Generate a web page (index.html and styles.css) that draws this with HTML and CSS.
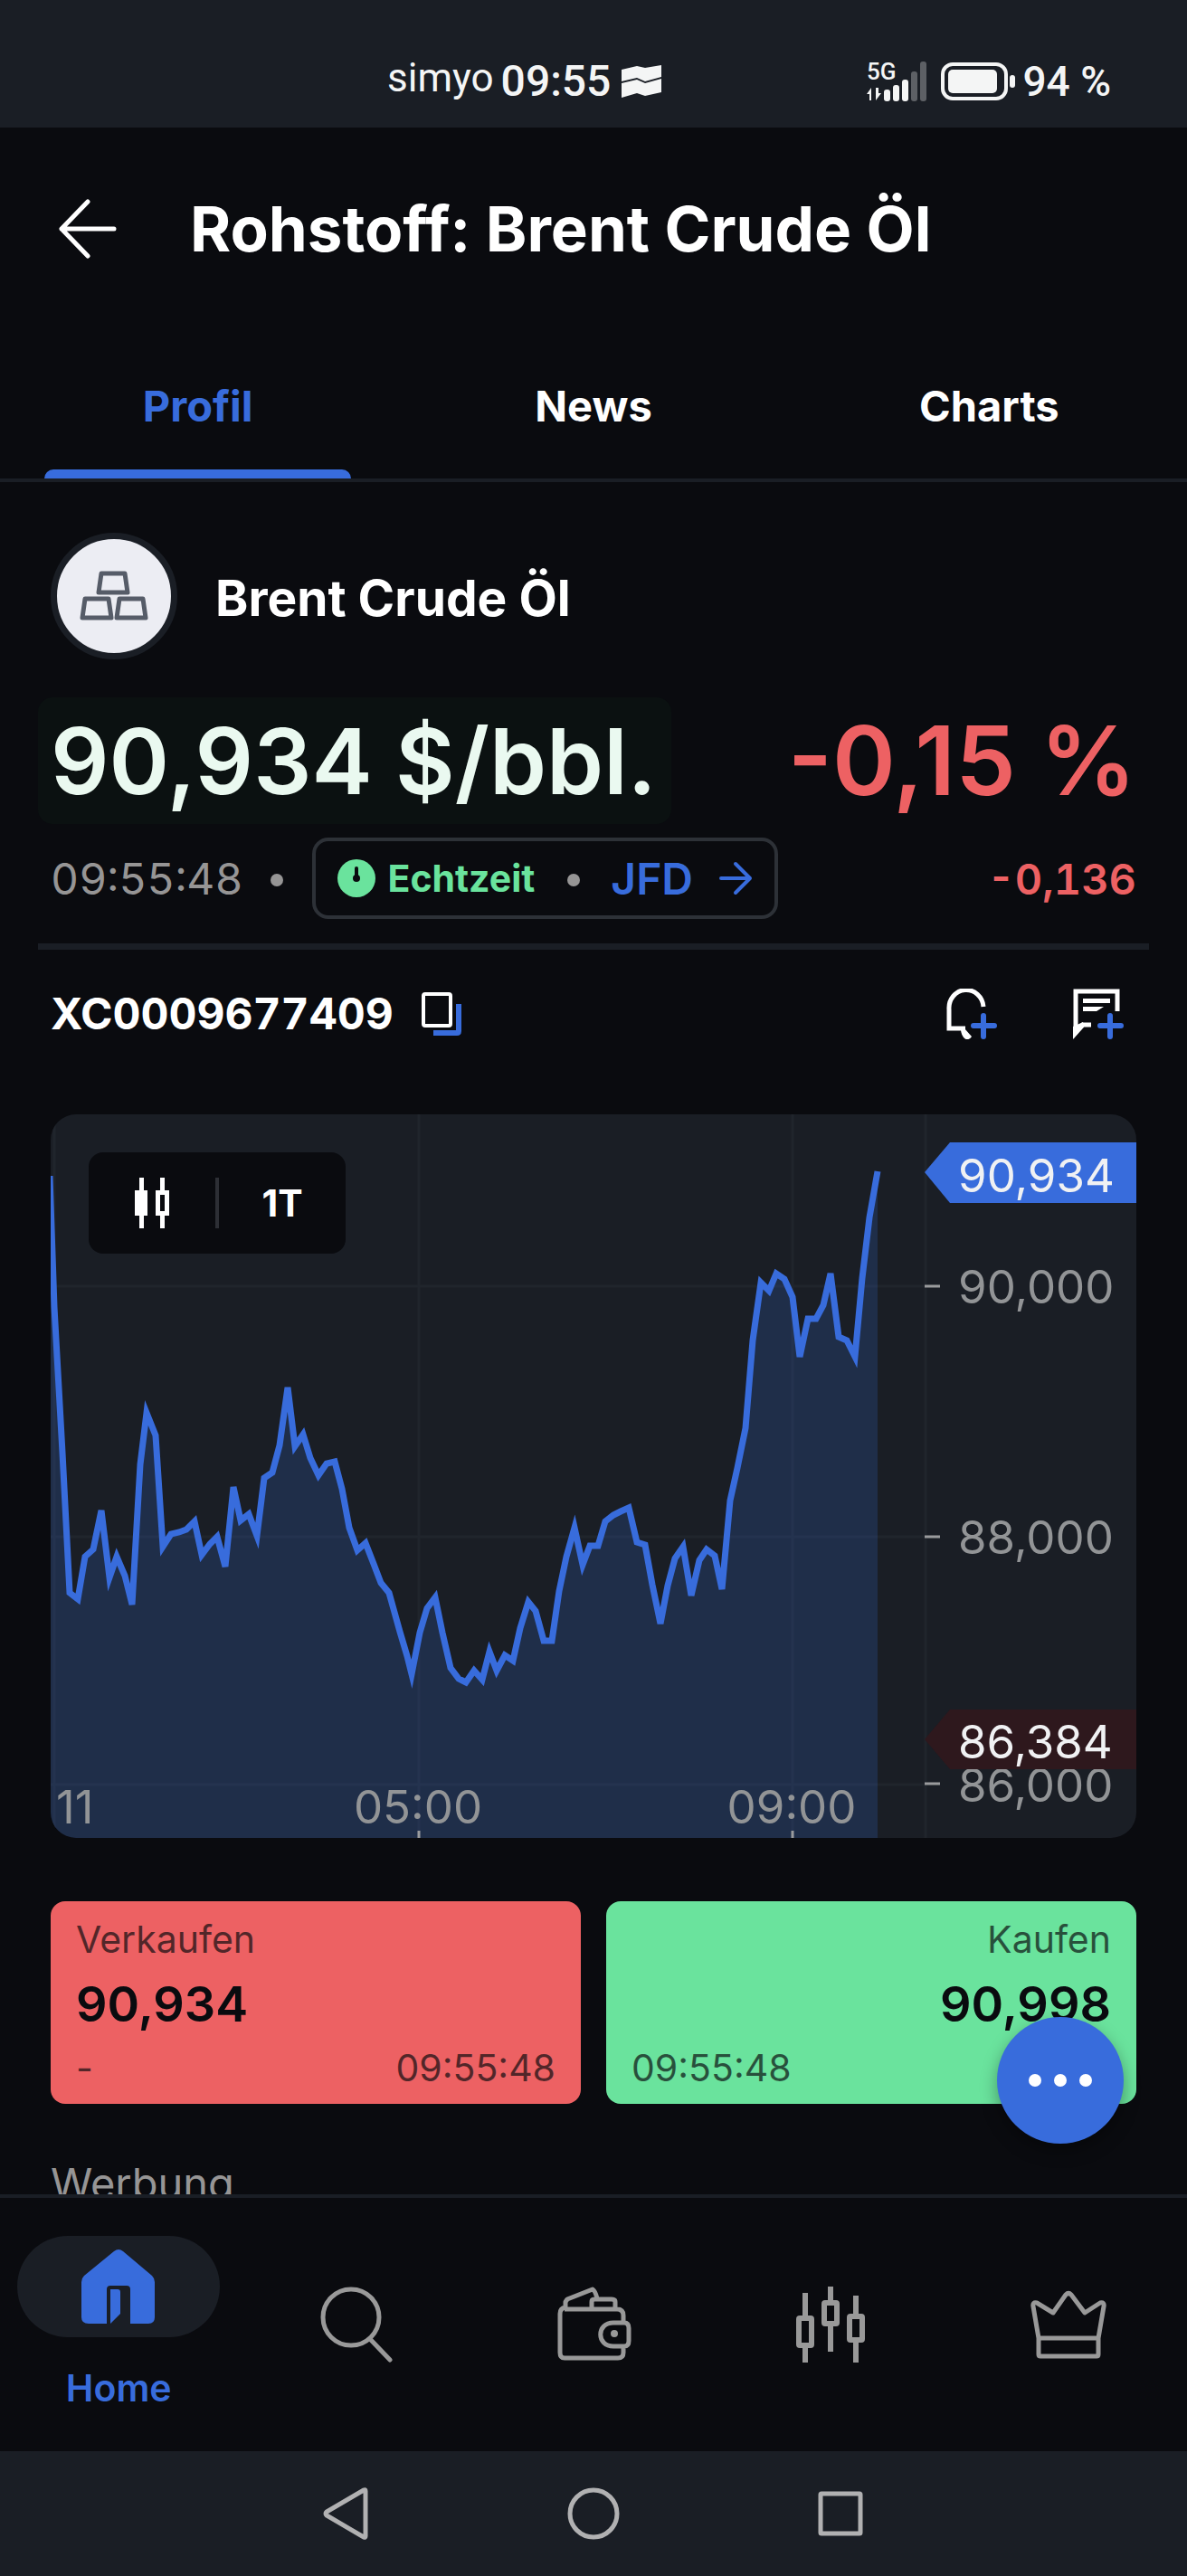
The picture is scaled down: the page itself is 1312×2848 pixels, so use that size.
FILE: index.html
```html
<!DOCTYPE html>
<html lang="de">
<head>
<meta charset="utf-8">
<meta name="viewport" content="width=device-width, initial-scale=1">
<title>Rohstoff: Brent Crude Öl</title>
<link rel="stylesheet" href="styles.css">
</head>
<body>
<div class="app">
  <div class="status">
    <div class="status-left">
      <span class="carrier">simyo</span>
      <span class="clock">09:55</span>
      <svg class="wave" width="44" height="36" viewBox="0 0 44 36" fill="#f4f5f5"><path d="M0 5 17 1 26 3 44 0V13L26 18 17 14 0 18ZM0 20 17 16 26 20 44 15V30L26 34 17 31 0 36Z"/></svg>
    </div>
    <div class="status-right">
      <svg class="signal" width="68" height="44" viewBox="0 0 68 44"><text x="0" y="20" class="net">5G</text><g fill="#f4f5f5"><path d="M5 43V29L0 36H3V43ZM10 29V43L16 35H13V29Z"/><rect x="19" y="31" width="7" height="13" rx="3"/><rect x="29" y="26" width="7" height="18" rx="3"/><rect x="39" y="20" width="7" height="24" rx="3"/></g><g fill="#5d6065"><rect x="49" y="11" width="7" height="33" rx="3"/><rect x="59" y="0" width="7" height="44" rx="3"/></g></svg>
      <svg width="84" height="42" viewBox="0 0 84 42"><rect x="2" y="2" width="70" height="38" rx="11" fill="none" stroke="#f4f5f5" stroke-width="4"/><rect x="8" y="8" width="54" height="26" rx="5" fill="#f4f5f5"/><rect x="76" y="14" width="6" height="14" rx="3" fill="#f4f5f5"/></svg>
      <span class="charge">94 %</span>
    </div>
  </div>

  <header class="header">
    <button class="icon-btn" aria-label="Zurück"><svg width="66" height="66" viewBox="0 0 66 66" fill="none" stroke="#fff" stroke-width="5" stroke-linecap="round" stroke-linejoin="round"><path d="M62 33H4M33 3 4 33 33 63"/></svg></button>
    <h1 class="title">Rohstoff: Brent Crude Öl</h1>
  </header>

  <nav class="tabs">
    <a class="tab tab-active" href="#profil">Profil</a>
    <a class="tab" href="#news">News</a>
    <a class="tab" href="#charts">Charts</a>
  </nav>

  <main class="main" id="profil">
    <div class="asset">
      <span class="avatar"><svg width="76" height="56" viewBox="0 0 76 56" fill="none" stroke="#565c68" stroke-width="5" stroke-linejoin="round"><path d="M24 3H50L53 24H21ZM6 31H32L35 52H3ZM44 31H70L73 52H41Z"/></svg></span>
      <h2 class="asset-name">Brent Crude Öl</h2>
    </div>
    <div class="quote">
      <span class="price">90,934 $/bbl.</span>
      <span class="pct">-0,15 %</span>
    </div>
    <div class="meta">
      <span class="time">09:55:48</span>
      <span class="dot"></span>
      <button class="source">
        <svg width="42" height="42" viewBox="0 0 42 42"><circle cx="21" cy="21" r="21" fill="#6ae39d"/><path d="M21 10V20" stroke="#0a0b0f" stroke-width="4" stroke-linecap="round"/><circle cx="21" cy="21" r="4" fill="#0a0b0f"/></svg>
        <span class="live">Echtzeit</span>
        <span class="dot"></span>
        <span class="venue">JFD</span>
        <svg class="go" width="38" height="38" viewBox="0 0 38 38" fill="none" stroke="#386cdc" stroke-width="4" stroke-linecap="round" stroke-linejoin="round"><path d="M3 19H35M19 3 35 19 19 35"/></svg>
      </button>
      <span class="abs">-0,136</span>
    </div>
    <div class="ident">
      <span class="isin">XC0009677409</span>
      <button class="icon-btn" aria-label="Kopieren"><svg width="46" height="50" viewBox="0 0 46 50" fill="none"><rect x="3" y="3" width="30" height="35" rx="2" stroke="#fff" stroke-width="4"/><path d="M14 46H40Q42 46 42 44V14" stroke="#386cdc" stroke-width="6"/></svg></button>
      <span class="grow"></span>
      <button class="icon-btn" aria-label="Alarm hinzufügen"><svg width="56" height="56" viewBox="0 0 56 56" fill="none"><path d="M21 44H3V23A19 20 0 0 1 41 20" stroke="#fff" stroke-width="5"/><path d="M16 46C18 58 25 58 28 53L20 44Z" fill="#fff"/><path d="M41 30V53M30 41H53" stroke="#386cdc" stroke-width="6" stroke-linecap="round"/></svg></button>
      <button class="icon-btn note" aria-label="Notiz hinzufügen"><svg width="56" height="56" viewBox="0 0 56 56" fill="none"><path d="M49 25V3H3V49L11 40H20" stroke="#fff" stroke-width="5"/><path d="M0 56V42L11 37 12 41ZM11 11H41V16H11ZM11 20H34L26 25H11Z" fill="#fff"/><path d="M41 30V53M30 41H53" stroke="#386cdc" stroke-width="6" stroke-linecap="round"/></svg></button>
    </div>

    <section class="chart">
      <svg class="plot" viewBox="0 0 1200 800" role="img" aria-label="Kursverlauf">
        <g stroke="#20252c" stroke-width="3"><path d="M4 0V800M407 0V800M820 0V800M967 0V800M0 190H967M0 467H967M0 741H967"/></g>
        <path class="area" d="M-1 68 4 213 13 374 21 529 30 536 38 489 47 481 56 438 65 512 73 489 82 510 90 542 99 387 106 330 116 355 124 478 133 464 142 462 150 459 159 450 167 487 176 475 184 467 193 500 202 412 210 449 219 442 228 466 236 402 245 396 253 366 262 302 270 367 279 354 287 380 296 399 305 386 314 384 322 414 330 457 339 482 348 474 357 497 365 518 374 529 386 572 394 599 399 619 408 573 416 546 425 534 433 573 442 612 451 624 459 628 468 615 477 625 485 594 493 615 502 598 511 604 519 568 528 539 536 549 545 582 554 582 562 527 570 489 579 457 588 498 596 477 605 477 613 450 622 443 630 439 639 435 648 473 657 476 665 520 674 563 682 521 690 491 699 478 708 532 717 493 725 481 734 488 742 525 751 427 759 391 768 347 776 250 785 186 794 195 802 176 811 182 820 202 828 268 837 226 846 226 854 211 862 176 871 246 880 250 889 268 897 181 905 114 914 63V800H-1Z"/>
        <path class="line" d="M-1 68 4 213 13 374 21 529 30 536 38 489 47 481 56 438 65 512 73 489 82 510 90 542 99 387 106 330 116 355 124 478 133 464 142 462 150 459 159 450 167 487 176 475 184 467 193 500 202 412 210 449 219 442 228 466 236 402 245 396 253 366 262 302 270 367 279 354 287 380 296 399 305 386 314 384 322 414 330 457 339 482 348 474 357 497 365 518 374 529 386 572 394 599 399 619 408 573 416 546 425 534 433 573 442 612 451 624 459 628 468 615 477 625 485 594 493 615 502 598 511 604 519 568 528 539 536 549 545 582 554 582 562 527 570 489 579 457 588 498 596 477 605 477 613 450 622 443 630 439 639 435 648 473 657 476 665 520 674 563 682 521 690 491 699 478 708 532 717 493 725 481 734 488 742 525 751 427 759 391 768 347 776 250 785 186 794 195 802 176 811 182 820 202 828 268 837 226 846 226 854 211 862 176 871 246 880 250 889 268 897 181 905 114 914 63"/>
        <path d="M966 190H983M966 467H983M966 740H983M407 792V800M820 792V800" stroke="#9a9b9d" stroke-width="3"/>
        <g class="axis">
          <text x="1003" y="209">90,000</text><text x="1003" y="486">88,000</text><text x="1003" y="760">86,000</text>
          <text x="6" y="784">11</text><text x="406" y="784" text-anchor="middle">05:00</text><text x="819" y="784" text-anchor="middle">09:00</text>
        </g>
        <path d="M966 64 994 31H1200V98H994Z" fill="#386cdc"/>
        <path d="M966 691 994 658H1200V724H994Z" fill="#2e181d"/>
        <g class="axis tag"><text x="1003" y="86">90,934</text><text x="1003" y="712">86,384</text></g>
      </svg>
      <div class="tools">
        <button class="tool" aria-label="Kerzenchart"><svg width="40" height="56" viewBox="0 0 40 56"><path d="M6 0H11V14H15V42H11V56H6V42H1V14H6ZM29 0H34V14H39V42H34V56H29V42H24V14H29Z" fill="#fff"/><path d="M29 19H34V37H29Z" fill="#0a0b0f"/></svg></button>
        <span class="tool-line"></span>
        <button class="tool">1T</button>
      </div>
    </section>

    <div class="trade">
      <button class="side sell">
        <span class="label">Verkaufen</span>
        <span class="rate">90,934</span>
        <span class="foot"><span>-</span><span>09:55:48</span></span>
      </button>
      <button class="side buy">
        <span class="label">Kaufen</span>
        <span class="rate">90,998</span>
        <span class="foot"><span>09:55:48</span></span>
      </button>
    </div>
    <p class="ad">Werbung</p>
    <button class="fab" aria-label="Mehr"><svg width="72" height="16" viewBox="0 0 72 16" fill="#fff"><circle cx="8" cy="8" r="7"/><circle cx="36" cy="8" r="7"/><circle cx="64" cy="8" r="7"/></svg></button>
  </main>

  <nav class="bottom">
    <a class="item item-active" href="#home">
      <span class="pill"><svg width="82" height="82" viewBox="0 0 82 82"><path d="M36 2Q41-2 46 2L78 29Q81 32 81 36V75Q81 82 74 82H54V44Q54 40 50 40H32Q28 40 28 44V82H8Q0 82 0 75V36Q0 32 3 29ZM32 44H40Q43 44 43 47V71L32 82Z" fill="#386cdc"/></svg></span>
      <span>Home</span>
    </a>
    <a class="item" href="#suche" aria-label="Suche"><svg width="84" height="84" viewBox="0 0 84 84" fill="none" stroke="#999" stroke-width="5" stroke-linecap="round"><circle cx="36" cy="34" r="31"/><path d="M57 58 79 81"/></svg></a>
    <a class="item" href="#depot" aria-label="Depot"><svg width="84" height="84" viewBox="0 0 84 84" fill="none" stroke="#999" stroke-width="5" stroke-linejoin="round"><path d="M10 25H68Q75 25 75 32V39M75 68V73Q75 79 69 79H10Q5 79 5 73V30Q5 24 11 23L11 17 13 14 41 3Q44 5 46 13M40 24V17Q40 14 43 14H62Q66 14 66 17V24M64 40H76Q81 40 81 46V60Q81 66 76 66H64C45 66 45 40 64 40Z"/><circle cx="65" cy="52" r="4" fill="#999" stroke="none"/></svg></a>
    <a class="item" href="#maerkte" aria-label="Märkte"><svg width="84" height="84" viewBox="0 0 84 84" fill="none" stroke="#999" stroke-width="6" stroke-linejoin="round"><path d="M14 7V33M14 67V84M42 0V16M42 43V72M70 10V32M70 60V84"/><rect x="7" y="35" width="14" height="30" rx="1"/><rect x="35" y="18" width="14" height="23" rx="1"/><rect x="63" y="33" width="14" height="26" rx="1"/></svg></a>
    <a class="item" href="#premium" aria-label="Premium"><svg width="84" height="84" viewBox="0 0 84 84" fill="none" stroke="#999" stroke-width="5" stroke-linejoin="round"><path d="M9 57 3 22Q2 17 7 18L25 29 39 9Q42 6 45 9L60 29 77 18Q82 17 81 22L75 57ZM9 57V75Q9 77 11 77H73Q75 77 75 75V57"/></svg></a>
  </nav>

  <div class="system">
    <svg width="58" height="58" viewBox="0 0 58 58"><path d="M50 4V54Q50 56 48 55L7 31Q5 29 7 27L48 3Q50 2 50 4Z"/></svg>
    <svg width="58" height="58" viewBox="0 0 58 58"><circle cx="29" cy="29" r="26"/></svg>
    <svg width="58" height="58" viewBox="0 0 58 58"><rect x="7" y="7" width="44" height="44" rx="1"/></svg>
  </div>
</div>
</body>
</html>
```
FILE: styles.css
```css
* { box-sizing: border-box; }
body { margin: 0; background: #0a0b0f; color: #fff; font-family: Inter, "Liberation Sans", sans-serif; }
svg { display: block; flex: none; }
button { padding: 0; border: 0; background: none; color: inherit; font: inherit; cursor: pointer; }
a { color: inherit; text-decoration: none; }
h1, h2, p { margin: 0; }
.grow { flex: 1; }
.icon-btn { display: flex; }

.app { display: flex; flex-direction: column; height: 100vh; }

.status { display: flex; justify-content: space-between; flex: none; height: 141px; padding: 60px 84px 0 428px; background: #1a1e25; color: #f4f5f5; font-family: Roboto, sans-serif; line-height: 60px; }
.status-left, .status-right { display: flex; align-items: center; height: 60px; }
.carrier { font-size: 44px; line-height: 52px; align-self: flex-start; margin-right: 8px; }
.clock { font-size: 48px; font-weight: 500; }
.charge { font-size: 46px; font-weight: 500; }
.wave { margin-left: 12px; }
.status-right svg { margin-right: 6px; }
.status-right .signal { margin-right: 14px; overflow: visible; }
.net { font: 500 26px Roboto, sans-serif; fill: #f4f5f5; }

.header { display: flex; align-items: center; gap: 80px; flex: none; height: 224px; padding: 0 64px; }
.title { font-size: 69px; font-weight: 700; line-height: 80px; }

.tabs { display: flex; flex: none; height: 168px; border-bottom: 4px solid #1a1e25; }
.tab { position: relative; flex: 1; padding-top: 56px; text-align: center; font-size: 47px; font-weight: 700; line-height: 56px; }
.tab-active { color: #386cdc; }
.tab-active::after { content: ""; position: absolute; left: 49px; right: 49px; bottom: 0; height: 10px; border-radius: 10px 10px 0 0; background: #386cdc; }

.main { position: relative; flex: 1; min-height: 0; padding: 56px 56px 0; overflow: hidden; }
.asset { display: flex; align-items: center; gap: 42px; }
.avatar { display: flex; align-items: center; justify-content: center; width: 140px; height: 140px; border: 7px solid #1a1e25; border-radius: 50%; background: #ecedf3; }
.asset-name { padding-top: 4px; font-size: 55px; font-weight: 700; line-height: 64px; }

.quote { display: flex; align-items: center; justify-content: space-between; height: 140px; margin: 42px 0 0 -14px; font-size: 101px; font-weight: 600; line-height: 140px; white-space: nowrap; }
.price { padding: 0 16px 0 14px; border-radius: 16px; background: #0b1111; color: #eaf9f0; }
.pct { color: #ed6163; font-size: 106px; }

.meta { display: flex; align-items: center; height: 90px; margin: 15px -14px 0; padding: 0 14px; font-size: 48px; font-variant-numeric: tabular-nums; }
.time { color: #969595; }
.dot { width: 14px; height: 14px; border-radius: 50%; background: #969595; }
.meta > .dot { margin: 4px 32px 0 30px; }
.source { display: flex; align-items: center; height: 90px; padding: 0 24px; border: 4px solid #2d3137; border-radius: 18px; }
.live { margin-left: 14px; color: #6ae39d; font-size: 41px; font-weight: 700; }
.source .dot { margin: 4px 34px 0 36px; }
.venue { color: #386cdc; font-weight: 600; }
.go { margin-left: 28px; }
.abs { margin-left: auto; color: #ed6163; font-size: 47px; font-weight: 600; }

.ident { display: flex; align-items: center; height: 189px; margin: 27px -14px 0; padding: 0 28px 41px 14px; border-top: 7px solid #1a1e25; }
.isin { margin-right: 30px; font-size: 48px; font-weight: 700; font-variant-numeric: tabular-nums; }
.note { margin-left: 84px; }

.chart { position: relative; border-radius: 28px; overflow: hidden; background: #1a1e25; }
.plot { width: 100%; height: auto; }
.area { fill: #386cdc; fill-opacity: .2; }
.line { fill: none; stroke: #386cdc; stroke-width: 7; stroke-miterlimit: 5; }
.axis { fill: #929496; font-size: 51px; }
.tag { fill: #f0f1f3; }
.tools { position: absolute; top: 42px; left: 42px; display: flex; align-items: center; width: 284px; height: 112px; border-radius: 16px; background: #0a0b0f; }
.tool { display: flex; flex: 1; justify-content: center; font-size: 41px; font-weight: 700; line-height: 48px; }
.tool-line { width: 4px; height: 56px; background: #2d2f35; }

.trade { display: flex; gap: 28px; margin-top: 70px; }
.side { display: flex; flex: 1; flex-direction: column; height: 224px; padding: 18px 28px 0; border-radius: 16px; color: #0a0b0f; text-align: left; }
.sell { background: #ed6163; }
.buy { background: #6ae39d; }
.label { font-size: 41px; line-height: 48px; opacity: .68; }
.rate { margin-top: 16px; font-size: 54px; font-weight: 600; line-height: 64px; }
.foot { display: flex; justify-content: space-between; margin-top: 14px; font-size: 41px; line-height: 48px; opacity: .68; }
.buy .label, .buy .rate { text-align: right; }
.ad { margin-top: 58px; color: #969595; font-size: 47px; line-height: 60px; }
.fab { position: absolute; right: 70px; bottom: 56px; display: flex; align-items: center; justify-content: center; width: 140px; height: 140px; border-radius: 50%; background: #386cdc; box-shadow: 0 8px 18px rgba(0, 0, 0, .35); }

.bottom { display: flex; flex: none; height: 284px; border-top: 4px solid #1a1e25; }
.item { display: flex; flex: 1; flex-direction: column; align-items: center; padding-top: 98px; }
.item-active { padding-top: 42px; color: #386cdc; font-size: 41px; font-weight: 600; line-height: 48px; gap: 32px; }
.pill { display: flex; align-items: center; justify-content: center; width: 224px; height: 112px; border-radius: 56px; background: #1a1e25; }

.system { display: flex; align-items: center; justify-content: center; gap: 215px; flex: none; height: 138px; background: #1a1e25; fill: none; stroke: #b1b1b2; stroke-width: 5; }
```
